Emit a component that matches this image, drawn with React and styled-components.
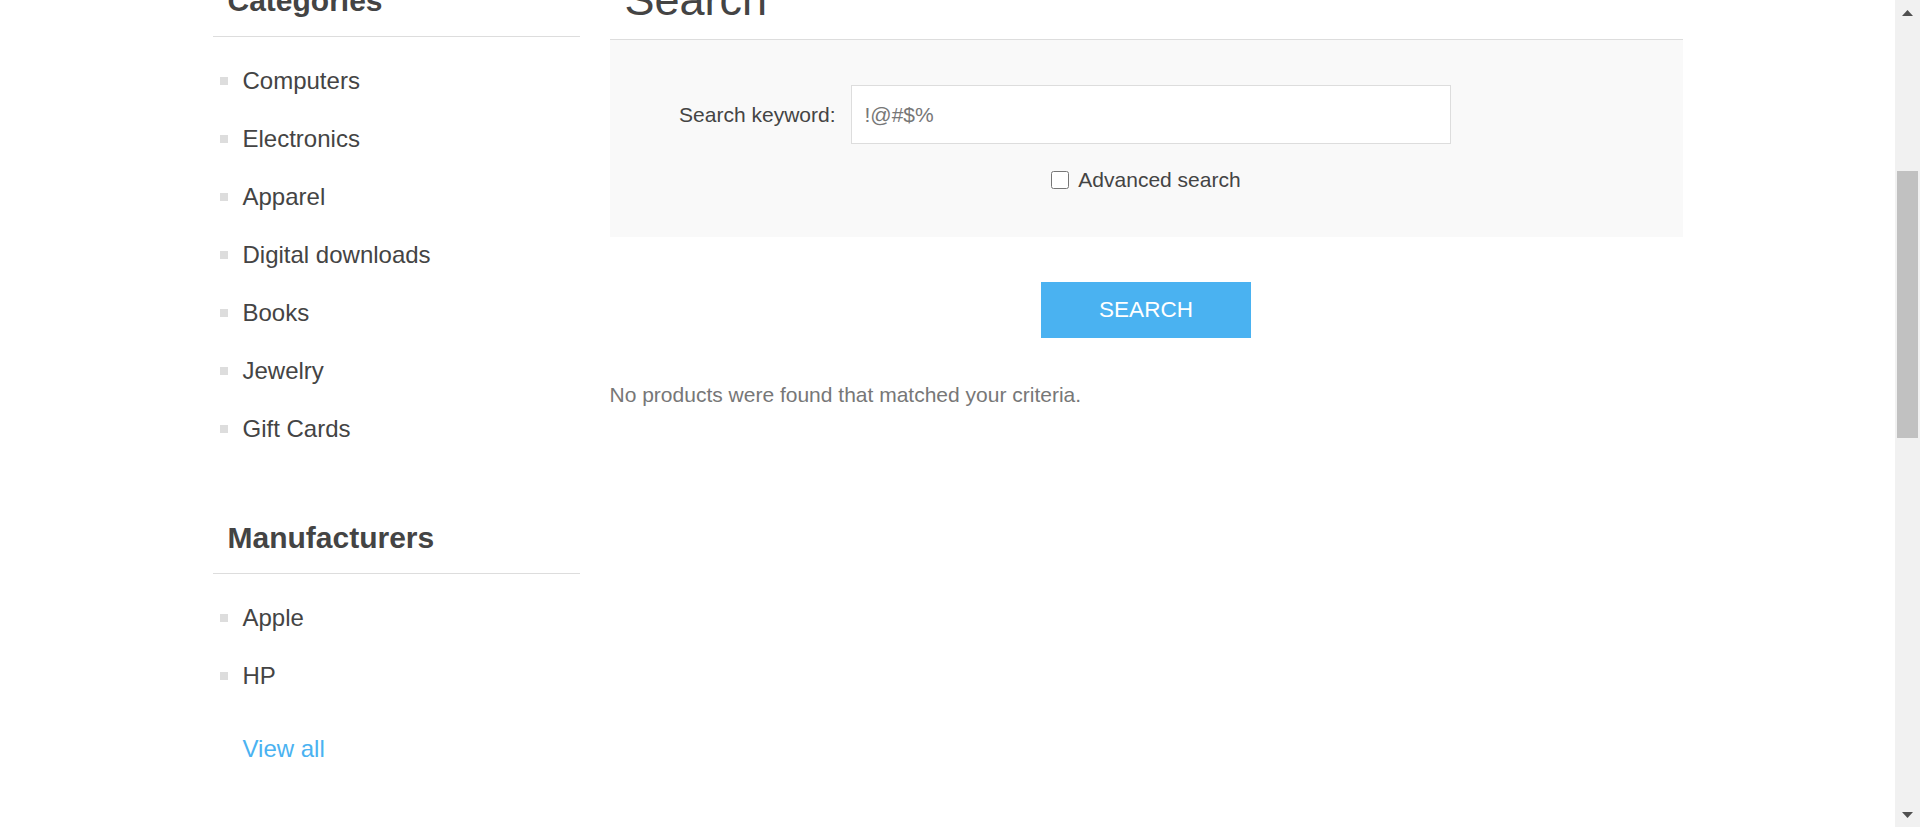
import styled, { createGlobalStyle } from 'styled-components';

const categories = [
  'Computers',
  'Electronics',
  'Apparel',
  'Digital downloads',
  'Books',
  'Jewelry',
  'Gift Cards',
];

const manufacturers = ['Apple', 'HP'];

const GlobalStyle = createGlobalStyle`
  *, *::before, *::after {
    box-sizing: border-box;
  }

  html, body {
    margin: 0;
    padding: 0;
    height: 100%;
    overflow: hidden;
    background: #fff;
  }

  body {
    font-family: "Liberation Sans", Arial, sans-serif;
    color: #444;
  }
`;

const App = () => {
  return (
    <>
      <GlobalStyle />
      <Screen>
        <Viewport>
          {/* the page is shown scrolled down a little, so the tops of the titles are cut */}
          <MasterWrapper>
            <Sidebar>
              <Block>
                <BlockTitle>Categories</BlockTitle>
                <List>
                  {categories.map((name) => (
                    <ListItem key={name}>
                      <Bullet />
                      <ListLink href="#">{name}</ListLink>
                    </ListItem>
                  ))}
                </List>
              </Block>
              <Block>
                <BlockTitle>Manufacturers</BlockTitle>
                <List>
                  {manufacturers.map((name) => (
                    <ListItem key={name}>
                      <Bullet />
                      <ListLink href="#">{name}</ListLink>
                    </ListItem>
                  ))}
                </List>
                <ViewAll href="#">View all</ViewAll>
              </Block>
            </Sidebar>

            <Center>
              <PageTitle>
                <h1>Search</h1>
              </PageTitle>
              <FormFields>
                <InputRow>
                  <FieldLabel htmlFor="q">Search keyword:</FieldLabel>
                  <TextInput id="q" type="text" defaultValue="!@#$%" />
                </InputRow>
                <CheckRow>
                  <CheckBox id="adv" type="checkbox" />
                  <CheckLabel htmlFor="adv">Advanced search</CheckLabel>
                </CheckRow>
              </FormFields>
              <Buttons>
                <SearchButton type="button">Search</SearchButton>
              </Buttons>
              <NoResult>No products were found that matched your criteria.</NoResult>
            </Center>
          </MasterWrapper>
        </Viewport>

        <Scrollbar>
          <ScrollArrow>
            <svg width="11" height="6" viewBox="0 0 11 6">
              <path d="M5.5 0L11 6H0z" fill="#505050" />
            </svg>
          </ScrollArrow>
          <ScrollTrack>
            <ScrollThumb $top={146} $height={267} />
          </ScrollTrack>
          <ScrollArrow>
            <svg width="11" height="6" viewBox="0 0 11 6">
              <path d="M0 0H11L5.5 6z" fill="#505050" />
            </svg>
          </ScrollArrow>
        </Scrollbar>
      </Screen>
    </>
  );
};

const Screen = styled.div`
  display: flex;
  height: 100vh;
  overflow: hidden;
`;

const Viewport = styled.div`
  flex: 1;
  overflow: hidden;
`;

const MasterWrapper = styled.div`
  display: flex;
  justify-content: space-between;
  width: 1470px;
  margin: -35px auto 0;
`;

const Sidebar = styled.div`
  width: 367.5px;
`;

const Block = styled.div`
  & + & {
    margin-top: 44px;
  }
`;

const BlockTitle = styled.div`
  padding: 18px 15px 17px;
  border-bottom: 1px solid #ddd;
  font-size: 30px;
  line-height: 36px;
  font-weight: bold;
  color: #444;
`;

const List = styled.ul`
  list-style: none;
  margin: 0;
  padding: 15px 0 0;
`;

const ListItem = styled.li`
  display: flex;
  align-items: center;
  height: 58px;
`;

const Bullet = styled.span`
  width: 8px;
  height: 8px;
  margin: 0 15px 0 7px;
  background: #ddd;
`;

const ListLink = styled.a`
  font-size: 24px;
  line-height: 58px;
  color: #444;
  text-decoration: none;
`;

const ViewAll = styled.a`
  display: block;
  margin-top: 15px;
  padding-left: 30px;
  font-size: 24px;
  line-height: 58px;
  color: #4ab2f1;
  text-decoration: none;
`;

const Center = styled.div`
  width: 1073px;
`;

const PageTitle = styled.div`
  height: 75px;
  padding: 9px 15px;
  border-bottom: 1px solid #ddd;

  h1 {
    margin: 0;
    font-size: 45px;
    line-height: 51.75px;
    font-weight: normal;
    color: #444;
  }
`;

const FormFields = styled.div`
  padding: 45px 22px 42px;
  background: #f9f9f9;
`;

const InputRow = styled.div`
  display: flex;
  align-items: center;
`;

const FieldLabel = styled.label`
  width: 204px;
  margin-right: 15px;
  text-align: right;
  font-size: 21px;
  color: #444;
`;

const TextInput = styled.input`
  width: 600px;
  height: 59px;
  padding: 0 13px;
  border: 1px solid #ddd;
  background: #fff;
  font-family: "Liberation Sans", Arial, sans-serif;
  font-size: 21px;
  color: #777;
  outline: none;
`;

const CheckRow = styled.div`
  display: flex;
  justify-content: center;
  align-items: center;
  height: 30px;
  margin-top: 21px;
`;

const CheckBox = styled.input`
  width: 18px;
  height: 18px;
  margin: 0 9px 0 0;
`;

const CheckLabel = styled.label`
  font-size: 21px;
  line-height: 30px;
  color: #444;
`;

const Buttons = styled.div`
  display: flex;
  justify-content: center;
  margin-top: 45px;
`;

const SearchButton = styled.button`
  min-width: 210px;
  padding: 15px 37.5px;
  border: none;
  background: #4ab2f1;
  font-family: "Liberation Sans", Arial, sans-serif;
  font-size: 22.5px;
  line-height: 26px;
  color: #fff;
  text-transform: uppercase;
  cursor: pointer;
`;

const NoResult = styled.div`
  margin-top: 45px;
  font-size: 21px;
  color: #777;
`;

const Scrollbar = styled.div`
  display: flex;
  flex-direction: column;
  width: 25px;
  background: #f1f1f1;
`;

const ScrollArrow = styled.div`
  display: flex;
  align-items: center;
  justify-content: center;
  height: 25px;
`;

const ScrollTrack = styled.div`
  flex: 1;
  padding: 0 2px;
`;

const ScrollThumb = styled.div`
  margin-top: ${(p) => p.$top}px;
  height: ${(p) => p.$height}px;
  background: #c1c1c1;
`;

export default App;
